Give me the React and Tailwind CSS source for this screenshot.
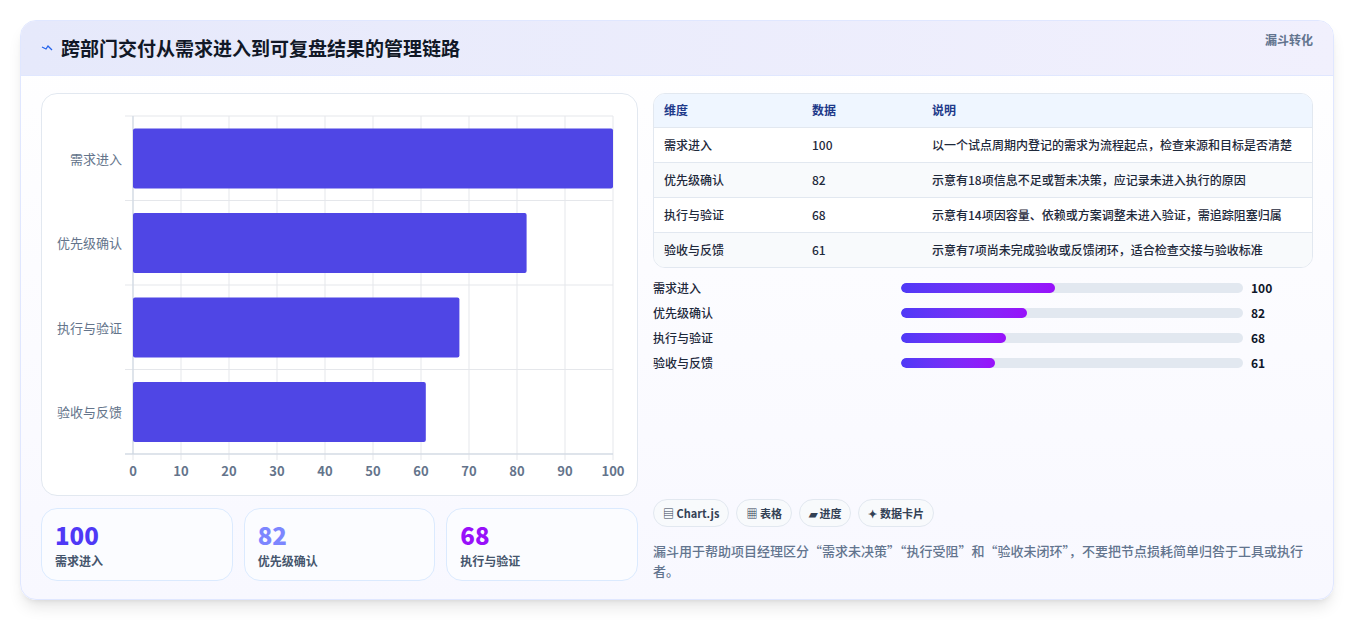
import React from 'react';

const rows = [
  { name: '需求进入', value: 100, note: '以一个试点周期内登记的需求为流程起点，检查来源和目标是否清楚' },
  { name: '优先级确认', value: 82, note: '示意有18项信息不足或暂未决策，应记录未进入执行的原因' },
  { name: '执行与验证', value: 68, note: '示意有14项因容量、依赖或方案调整未进入验证，需追踪阻塞归属' },
  { name: '验收与反馈', value: 61, note: '示意有7项尚未完成验收或反馈闭环，适合检查交接与验收标准' },
];

const font = { fontFamily: '"Noto Sans CJK SC", "Noto Sans", sans-serif' };

const Chart = () => {
  const x0 = 91, x1 = 571, y0 = 22, y1 = 360;
  const band = (y1 - y0) / 4;
  const ticks = [0, 10, 20, 30, 40, 50, 60, 70, 80, 90, 100];
  return (
    <svg width="597" height="402" viewBox="0 0 597 402" style={font}>
      {ticks.map((t) => {
        const x = x0 + (t / 100) * (x1 - x0);
        return (
          <g key={t}>
            <line x1={x} y1={y0} x2={x} y2={y1 + 6} stroke="#e5e7eb" />
            <text x={x} y={382} textAnchor="middle" fontSize="13" fontWeight="600" fill="#64748b">{t}</text>
          </g>
        );
      })}
      {[0, 1, 2, 3, 4].map((i) => (
        <line key={i} x1={x0 - 8} y1={y0 + i * band} x2={x1} y2={y0 + i * band} stroke="#e5e7eb" />
      ))}
      <line x1={x0} y1={y0} x2={x0} y2={y1} stroke="#cbd5e1" />
      <line x1={x0 - 8} y1={y1} x2={x1} y2={y1} stroke="#cbd5e1" />
      {rows.map((r, i) => {
        const y = y0 + i * band + 12.5;
        return (
          <g key={r.name}>
            <rect x={x0} y={y} width={(r.value / 100) * (x1 - x0)} height={60} rx="2" fill="#4f46e5" />
            <text x={80} y={y + 35} textAnchor="end" fontSize="13" fill="#64748b">{r.name}</text>
          </g>
        );
      })}
    </svg>
  );
};

export default function App() {
  return (
    <div className="min-h-screen bg-white p-5" style={font}>
      <div className="rounded-2xl border border-indigo-100 bg-gradient-to-b from-white to-[#f8f8ff] shadow-lg overflow-hidden">
        <div className="h-[55px] flex items-center justify-between px-5 bg-gradient-to-r from-[#e6e9fb] to-[#f1f0fd] border-b border-indigo-100">
          <div className="flex items-center gap-2">
            <svg width="12" height="12" viewBox="0 0 12 12"><path d="M1 5 L5 7 L7 4 L11 8" stroke="#2563eb" strokeWidth="1.3" fill="none" /></svg>
            <h1 className="text-[19px] font-bold text-[#111827]">跨部门交付从需求进入到可复盘结果的管理链路</h1>
          </div>
          <span className="text-xs font-semibold text-slate-500 -mt-4">漏斗转化</span>
        </div>
        <div className="flex gap-[15px] px-5 pt-[17px] pb-[18px]">
          <div className="w-[597px] flex flex-col gap-3">
            <div className="h-[403px] rounded-2xl border border-slate-200 bg-white">
              <Chart />
            </div>
            <div className="grid grid-cols-3 gap-[11px]">
              {rows.slice(0, 3).map((r, i) => (
                <div key={r.name} className="h-[73px] rounded-2xl border border-blue-100 bg-[#fbfcff] px-[13px] pt-3">
                  <div className={`text-2xl font-extrabold leading-7 ${['text-indigo-600', 'text-indigo-400', 'text-purple-600'][i]}`}>{r.value}</div>
                  <div className="text-xs font-semibold text-slate-600 mt-1">{r.name}</div>
                </div>
              ))}
            </div>
          </div>
          <div className="flex-1 flex flex-col">
            <div className="rounded-xl border border-slate-200 overflow-hidden bg-white">
              <table className="w-full text-xs text-[#1e293b]">
                <thead>
                  <tr className="bg-[#eff6ff] text-[#1e3a8a] border-b border-slate-200">
                    <th className="h-[33px] pl-[10px] text-left font-semibold w-[158px]">维度</th>
                    <th className="text-left font-semibold w-[120px]">数据</th>
                    <th className="text-left font-semibold">说明</th>
                  </tr>
                </thead>
                <tbody>
                  {rows.map((r, i) => (
                    <tr key={r.name} className={`${i % 2 ? 'bg-[#f8fafc]' : 'bg-white'} ${i < 3 ? 'border-b border-slate-200' : ''}`}>
                      <td className="h-[35px] pl-[10px] font-medium">{r.name}</td>
                      <td className="font-medium">{r.value}</td>
                      <td className="font-medium whitespace-nowrap">{r.note}</td>
                    </tr>
                  ))}
                </tbody>
              </table>
            </div>
            <div className="flex flex-col gap-[9px] mt-[12px]">
              {rows.map((r) => (
                <div key={r.name} className="flex items-center h-[16px] text-xs">
                  <span className="w-[248px] font-medium text-[#1e293b]">{r.name}</span>
                  <div className="w-[342px] h-[10px] rounded-full bg-slate-200 overflow-hidden">
                    <div className="h-full rounded-full bg-gradient-to-r from-indigo-600 to-purple-600" style={{ width: `${r.value * 0.45}%` }} />
                  </div>
                  <span className="ml-2 font-bold text-[#0f172a]">{r.value}</span>
                </div>
              ))}
            </div>
            <div className="mt-auto">
              <div className="flex gap-[7px]">
                {['▤ Chart.js', '▦ 表格', '▰ 进度', '✦ 数据卡片'].map((c) => (
                  <span key={c} className="h-[28px] px-[9px] flex items-center rounded-full border border-slate-200 bg-[#f8fafc] text-[11px] font-semibold text-[#334155]">{c}</span>
                ))}
              </div>
              <p className="mt-[14px] text-[13px] font-medium text-slate-500 leading-5">漏斗用于帮助项目经理区分“需求未决策”“执行受阻”和“验收未闭环”，不要把节点损耗简单归咎于工具或执行者。</p>
            </div>
          </div>
        </div>
      </div>
    </div>
  );
}
